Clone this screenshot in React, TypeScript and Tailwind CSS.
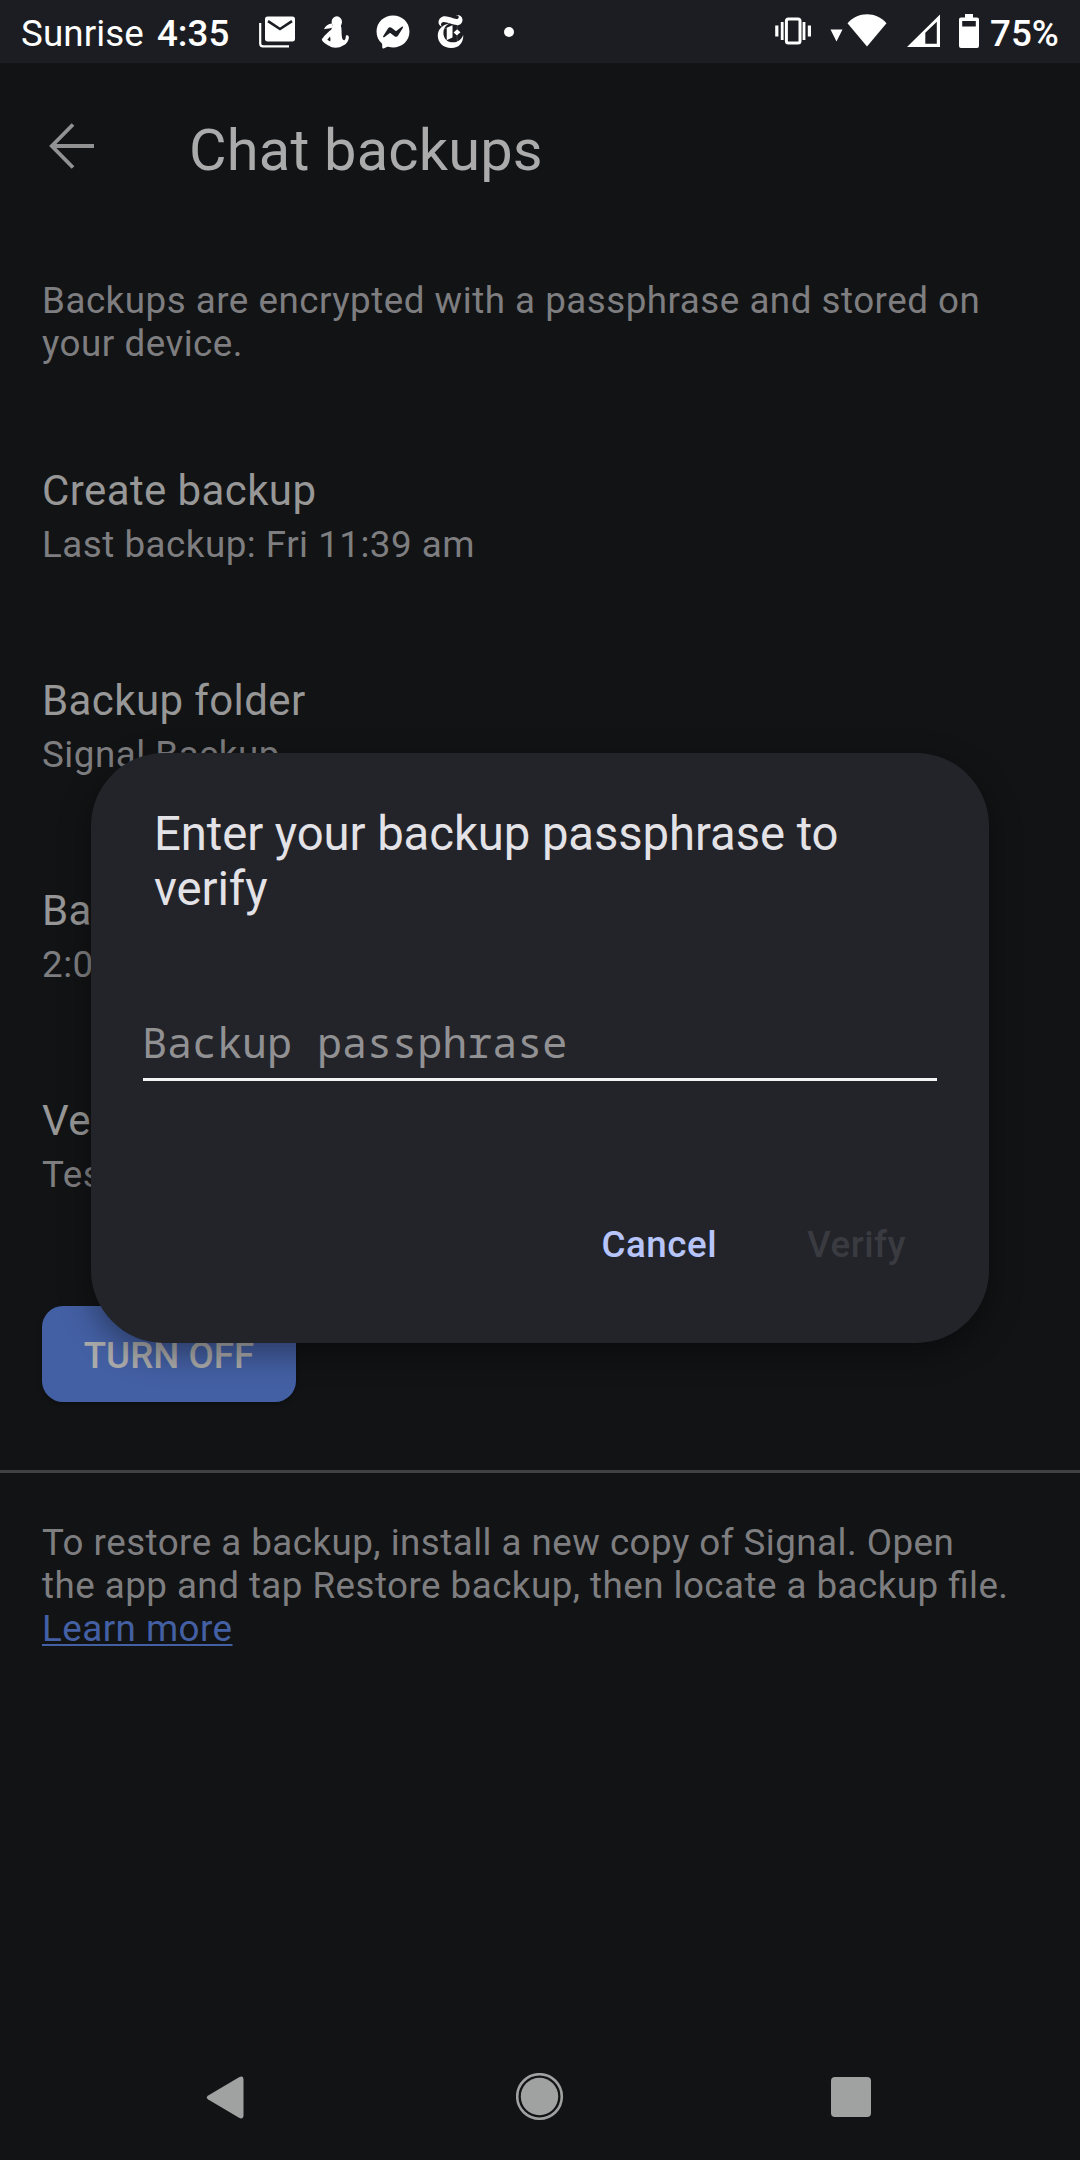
import React from "react";
import { FaFacebookMessenger } from "react-icons/fa";
import { SiNewyorktimes } from "react-icons/si";

const settings = [
  { title: "Create backup", detail: "Last backup: Fri 11:39 am" },
  { title: "Backup folder", detail: "Signal Backup" },
  { title: "Backup time", detail: "2:00 AM" },
  { title: "Verify backup passphrase", detail: "Test your backup passphrase" },
];

function MailStackIcon() {
  return (
    <svg className="h-8 w-[36px]" viewBox="0 0 36 32" fill="none">
      <path d="M1.2 7V27.5Q1.2 30.3 4 30.3H30" stroke="#fff" strokeWidth="2.2" />
      <rect x="6" y="0.4" width="30" height="25" rx="2.6" fill="#fff" />
      <path d="M9 5.2L21 13L33 5.2" stroke="#1c1d22" strokeWidth="2.6" />
    </svg>
  );
}

function FigureIcon() {
  return (
    <svg className="h-8 w-7" viewBox="0 0 28 32" fill="#fff">
      <ellipse cx="15.8" cy="6" rx="5.2" ry="5.8" />
      <path d="M10.8 7.4C7.5 7.8 4.2 9.6 3 13.2C6.5 12.4 9.6 12.6 12.4 11Z" />
      <path
        fillRule="evenodd"
        d="M12 9H19.8C21 13.5 20.4 17 20.8 20C21 22.3 21.6 24.3 23.2 24.2C25.2 23.6 24.3 20.8 25.2 19.3C27.6 18.6 28 20.5 27.8 22C27.2 26.3 24.6 28.6 21.6 29.8C18.5 32.4 10.8 32.4 8 29.8C5.4 28.8 1 25.6 0.8 23.6C2 21.2 6.5 16.5 10.2 13.8ZM9 20.4L6.3 23.8L9.2 25.6Q9.8 23 9 20.4Z"
      />
    </svg>
  );
}

function VibrateIcon() {
  return (
    <svg className="h-[28px] w-[38px]" viewBox="0 0 38 28" fill="none" stroke="#fff">
      <rect x="12.4" y="2" width="13.6" height="24" rx="2" strokeWidth="3" />
      <path d="M8.2 5V23M30 5V23" strokeWidth="2.8" />
      <path d="M2.8 8.5V19.5M35.4 8.5V19.5" strokeWidth="3.2" />
    </svg>
  );
}

function StatusBar() {
  return (
    <div className="flex h-[63px] items-start bg-[#1c1d22] text-[36.75px] leading-[43px] text-white">
      <div className="flex w-[259px] pt-[12px] pl-[21px]">
        <span className="tracking-[0.1px]">Sunrise</span>
        <span className="ml-[13px] font-medium">4:35</span>
      </div>
      <div className="flex h-[63px] flex-1 items-center">
        <MailStackIcon />
        <span className="ml-[26px]"><FigureIcon /></span>
        <FaFacebookMessenger className="ml-[27px] size-[34px]" />
        <SiNewyorktimes className="ml-[24px] size-[33px]" />
        <span className="ml-[37px] size-[10px] rounded-full bg-white" />
      </div>
      <div className="flex pt-[14px] pr-[21px]">
        <span className="mt-[3px]"><VibrateIcon /></span>
        <svg className="mt-[15px] ml-[18px] h-[13px] w-[13px]" viewBox="0 0 13 13" fill="#fff">
          <path d="M0.5 0.5H12.5L6.5 12.5Z" />
        </svg>
        <svg className="ml-[4px] h-[33px] w-[40px]" viewBox="0 0 40 33" fill="#fff">
          <path d="M20 32.5L0.5 9.2C6 3.2 12.5 0.3 20 0.3S34 3.2 39.5 9.2Z" />
        </svg>
        <svg className="ml-[20px] h-[33px] w-[33px]" viewBox="0 0 33 33" fill="#fff">
          <path fillRule="evenodd" d="M0 33L33 0.5V33ZM18.3 18.8V29.8H29.8V7.8Z" />
        </svg>
        <svg className="ml-[19px] h-[34px] w-[20px]" viewBox="0 0 20 34" fill="#fff">
          <path fillRule="evenodd" d="M6 0H14V3.6H18Q20 3.6 20 5.6V32Q20 34 18 34H2Q0 34 0 32V5.6Q0 3.6 2 3.6H6ZM3.2 7V12.6H16.8V7Z" />
        </svg>
        <span className="-mt-[2px] ml-[11px] w-[69px] font-medium whitespace-nowrap">75%</span>
      </div>
    </div>
  );
}

function PassphraseDialog() {
  return (
    <div
      role="dialog"
      className="absolute top-[753px] left-[91px] flex h-[590px] w-[898px] flex-col rounded-[73px] bg-[#232429] pt-[54px] shadow-[0_10px_32px_rgba(0,0,0,0.4)]"
    >
      <h2 className="ml-[63px] w-[740px] text-[47.25px] leading-[55px] tracking-[-0.07px] text-[#e3e2e7]">
        Enter your backup passphrase to verify
      </h2>
      <div className="mx-[52px] mt-[100px] h-[64px] border-b-[3px] border-[#f4f4f4] font-['Noto_Sans_Mono','DejaVu_Sans_Mono',monospace] text-[41.7px] leading-[50px] text-[#919194]">
        <span className="-ml-px">Backup passphrase</span>
      </div>
      <div className="mt-[142px] flex justify-end gap-[90px] pr-[83px] text-[36.75px] leading-[43px] font-medium tracking-[0.5px]">
        <button className="text-[#b6c4fa]">Cancel</button>
        <button className="text-[#3a3b40]">Verify</button>
      </div>
    </div>
  );
}

function NavigationBar() {
  return (
    <div className="mt-auto flex h-[126px] items-center pl-[206px] text-[#a0a2a1]">
      <svg className="h-[43px] w-[38px]" viewBox="0 0 38 43" fill="currentColor">
        <path d="M2.2 19.5L33 1.2Q37.5 -0.8 37.5 4V39Q37.5 43.8 33 41.8L2.2 23.5Q-0.6 21.5 2.2 19.5Z" />
      </svg>
      <svg className="ml-[272px] h-[48px] w-[48px]" viewBox="0 0 48 48" fill="none">
        <circle cx="23.5" cy="23.5" r="22.3" stroke="currentColor" strokeWidth="2.6" />
        <circle cx="23.5" cy="23.5" r="18.7" fill="currentColor" />
      </svg>
      <span className="ml-[267px] size-[40px] rounded-[4px] bg-current" />
    </div>
  );
}

export default function App() {
  return (
    <main className="relative flex h-[2160px] w-[1080px] flex-col overflow-hidden bg-[#121315] font-[Roboto,sans-serif] text-[36.75px] leading-[43px] text-[#7e7e80]">
      <StatusBar />
      <header className="flex pt-[53px] pl-[49px]">
        <svg className="mt-[7px] h-[46px] w-[46px]" viewBox="0 0 46 46" fill="none" stroke="#929292" strokeWidth="3.8">
          <path d="M24 1.5L2.8 23L24 44.5M2.8 23H45" />
        </svg>
        <h1 className="ml-[94px] text-[57.75px] leading-[68px] tracking-[0.2px] text-[#ababab]">Chat backups</h1>
      </header>
      <p className="mt-[95px] ml-[42px] w-[980px] tracking-[0.5px]">
        Backups are encrypted with a passphrase and stored on your device.
      </p>
      <div className="mt-[101px] ml-[42px] flex flex-col gap-[110px]">
        {settings.map((item) => (
          <div key={item.title} className="flex flex-col gap-[8px]">
            <span className="text-[42px] leading-[49px] tracking-[0.4px] text-[#979797]">{item.title}</span>
            <span className="tracking-[0.5px]">{item.detail}</span>
          </div>
        ))}
      </div>
      <button className="mt-[110px] ml-[42px] h-[96px] w-[254px] shrink-0 rounded-[21px] bg-[#4460a4] pt-[2px] font-medium text-[#ababab] shadow-[0_2px_5px_rgba(0,0,0,0.3)]">
        TURN OFF
      </button>
      <div className="mt-[68px] h-[3px] shrink-0 bg-[#404143]" />
      <p className="mt-[48px] ml-[42px] w-[1000px] tracking-[0.46px] [font-feature-settings:'liga']">
        To restore a backup, install a new copy of Signal. Open
        <br />
        the app and tap Restore backup, then locate a backup file.
        <br />
        <a className="text-[#4460a4] underline decoration-[2px] underline-offset-[3px]">Learn more</a>
      </p>
      <NavigationBar />
      <PassphraseDialog />
    </main>
  );
}
